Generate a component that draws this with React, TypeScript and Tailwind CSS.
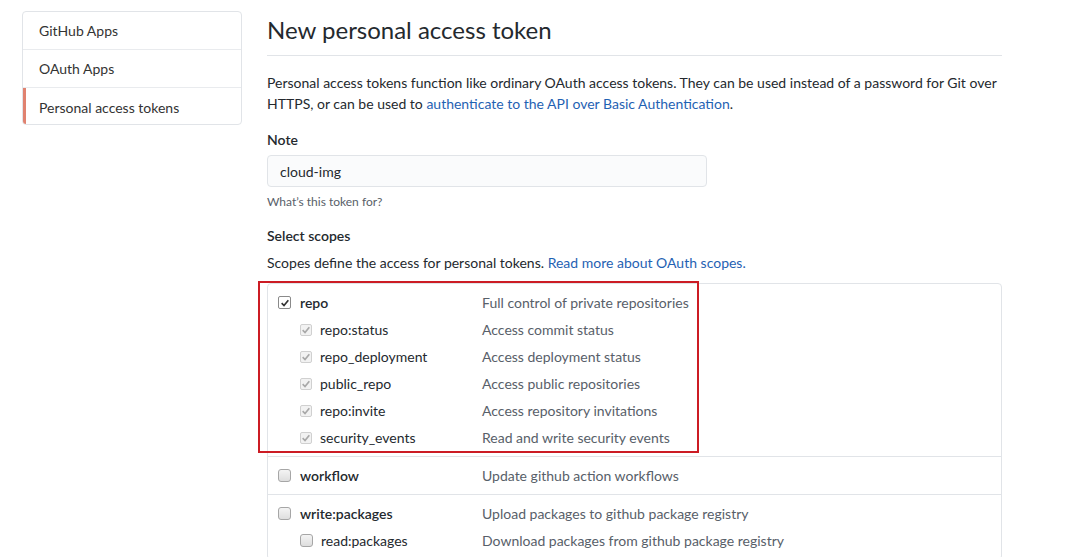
import React from 'react';

type Scope = {
  name: string;
  desc: string;
  checked?: boolean;
  children?: { name: string; desc: string }[];
};

const scopes: Scope[] = [
  {
    name: 'repo',
    desc: 'Full control of private repositories',
    checked: true,
    children: [
      { name: 'repo:status', desc: 'Access commit status' },
      { name: 'repo_deployment', desc: 'Access deployment status' },
      { name: 'public_repo', desc: 'Access public repositories' },
      { name: 'repo:invite', desc: 'Access repository invitations' },
      { name: 'security_events', desc: 'Read and write security events' },
    ],
  },
  { name: 'workflow', desc: 'Update github action workflows' },
  {
    name: 'write:packages',
    desc: 'Upload packages to github package registry',
    children: [{ name: 'read:packages', desc: 'Download packages from github package registry' }],
  },
];

function Check({ color }: { color: string }) {
  return (
    <svg viewBox="0 0 12 12" className="w-[10px] h-[10px]">
      <path d="M2 6.2 L4.8 9 L10 2.6" fill="none" stroke={color} strokeWidth="2" />
    </svg>
  );
}

function Checkbox({ state }: { state: 'on' | 'disabled' | 'off' }) {
  if (state === 'on') {
    return (
      <span className="flex items-center justify-center w-[13px] h-[13px] border border-[#8a8a8a] rounded-[2px] bg-white">
        <Check color="#333" />
      </span>
    );
  }
  if (state === 'disabled') {
    return (
      <span className="flex items-center justify-center w-[12px] h-[12px] border border-[#d0d0d0] rounded-[2px] bg-[#f2f2f2]">
        <Check color="#a8a8a8" />
      </span>
    );
  }
  return (
    <span className="block w-[13px] h-[13px] border border-[#a6a6a6] rounded-[3px] bg-gradient-to-b from-[#f4f4f4] to-[#dedede]" />
  );
}

function ScopeGroup({ scope, last }: { scope: Scope; last: boolean }) {
  return (
    <div className={`py-[5px] pl-[10px] ${last ? '' : 'border-b border-[#e1e4e8]'}`}>
      <div className="flex items-center h-[27px]">
        <div className="flex items-center w-[204px]">
          <Checkbox state={scope.checked ? 'on' : 'off'} />
          <span className="ml-[9px] font-semibold text-[#24292e]">{scope.name}</span>
        </div>
        <span className="text-[#586069]">{scope.desc}</span>
      </div>
      {scope.children?.map((c) => (
        <div key={c.name} className="flex items-center h-[27px]">
          <div className="flex items-center w-[204px] pl-[22px]">
            <Checkbox state={scope.checked ? 'disabled' : 'off'} />
            <span className="ml-[8px] text-[#24292e]">{c.name}</span>
          </div>
          <span className="text-[#586069]">{c.desc}</span>
        </div>
      ))}
    </div>
  );
}

export default function App() {
  const navItems = ['GitHub Apps', 'OAuth Apps', 'Personal access tokens'];

  return (
    <div
      className="flex min-h-[557px] bg-white pt-[11px] pl-[22px] text-[14px] leading-[21px] text-[#24292e] overflow-hidden"
      style={{ fontFamily: '"Segoe UI", Lato, "Open Sans", sans-serif' }}
    >
      <nav className="w-[220px] h-[114px] shrink-0 border border-[#e1e4e8] rounded-[4px] overflow-hidden">
        {navItems.map((item, i) => (
          <div
            key={item}
            className={`h-[38px] flex items-center text-[#333] ${
              i < navItems.length - 1 ? 'border-b border-[#e9ebee]' : ''
            } ${i === 2 ? 'border-l-[3px] border-l-[#e08270] pl-[13px]' : 'pl-[16px]'}`}
          >
            {item}
          </div>
        ))}
      </nav>

      <main className="ml-[25px] w-[735px] pt-[1px]">
        <div className="pb-[7px] border-b border-[#e1e4e8]">
          <h1 className="text-[24px] leading-[36px] font-normal text-[#24292e]">New personal access token</h1>
        </div>

        <p className="mt-[16px]">
          Personal access tokens function like ordinary OAuth access tokens. They can be used instead of a password for
          Git over HTTPS, or can be used to{' '}
          <a className="text-[#1f62b3]">authenticate to the API over Basic Authentication</a>.
        </p>

        <div className="mt-[15px] font-semibold">Note</div>
        <div className="mt-[5px] w-[440px] h-[32px] flex items-center px-[12px] bg-[#fafbfc] border border-[#e1e4e8] rounded-[4px]">
          cloud-img
        </div>
        <div className="mt-[6px] text-[12px] leading-[18px] text-[#586069]">What’s this token for?</div>

        <div className="mt-[14px] font-semibold">Select scopes</div>
        <p className="mt-[6px]">
          Scopes define the access for personal tokens.{' '}
          <a className="text-[#1f62b3]">Read more about OAuth scopes.</a>
        </p>

        <div className="relative mt-[10px] border border-[#e1e4e8] rounded-[4px]">
          {scopes.map((s, i) => (
            <ScopeGroup key={s.name} scope={s} last={i === scopes.length - 1} />
          ))}
          <div className="absolute left-[-10px] top-[-3px] w-[441px] h-[172px] border-2 border-[#cc1c24] pointer-events-none" />
        </div>
      </main>
    </div>
  );
}
